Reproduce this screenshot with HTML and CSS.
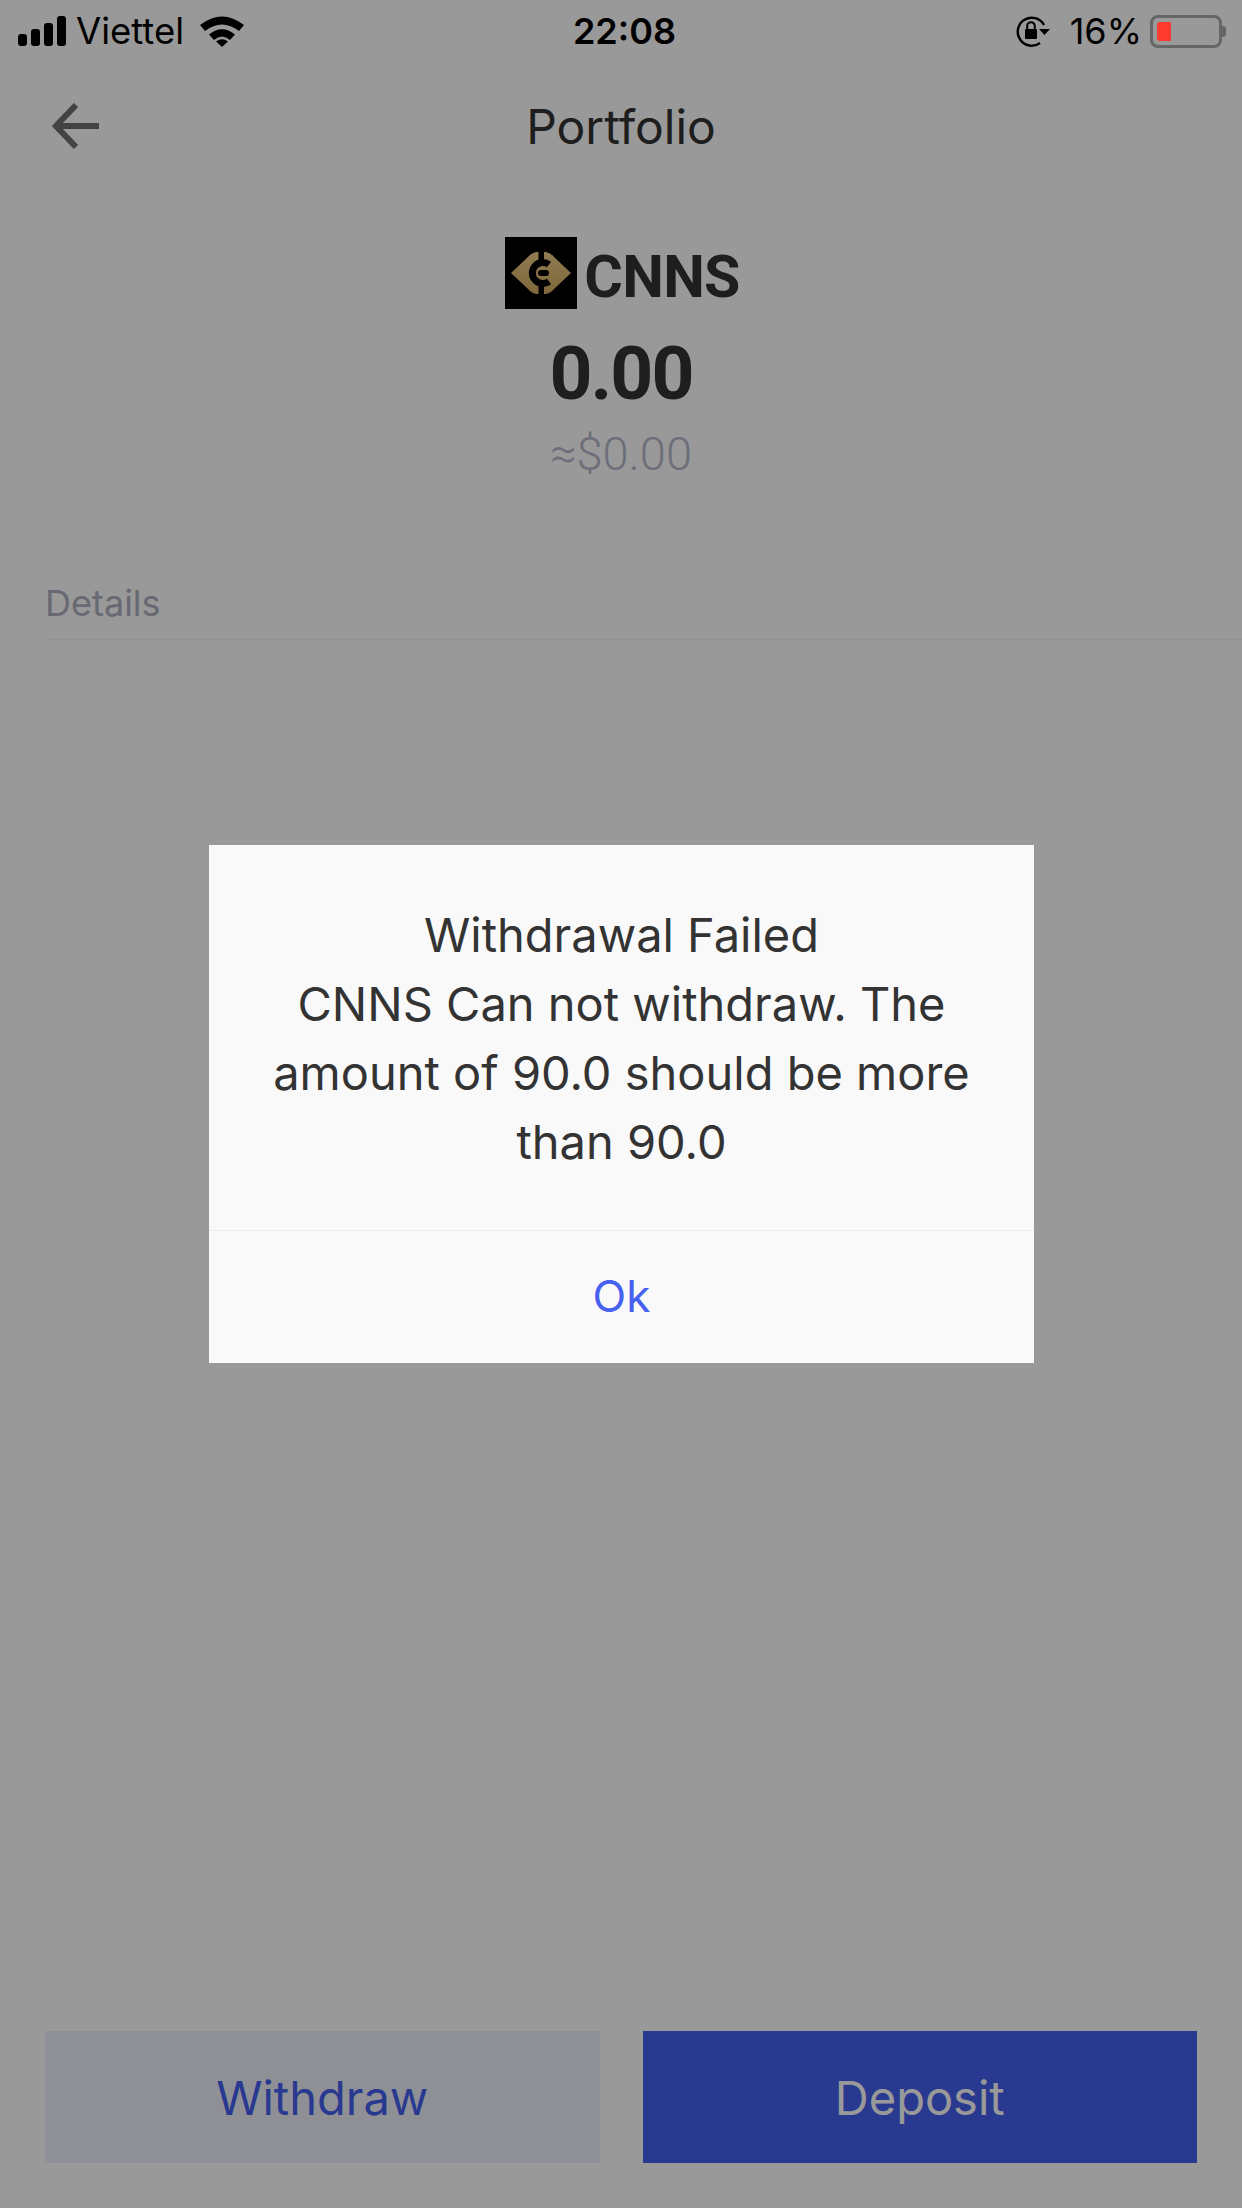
FILE: index.html
```html
<!DOCTYPE html>
<html lang="en">
<head>
    <meta charset="UTF-8">
    <meta name="viewport" content="width=device-width, initial-scale=1.0">
    <title>Portfolio</title>
    <link rel="stylesheet" href="styles.css">
</head>
<body>
    <div class="statusbar">
        <div class="status-left">
            <svg class="signal" width="50" height="30" viewBox="0 0 50 30">
                <rect x="0" y="18" width="9" height="12" rx="3"/>
                <rect x="13" y="13" width="9" height="17" rx="3"/>
                <rect x="26" y="7" width="9" height="23" rx="3"/>
                <rect x="39" y="0" width="9" height="30" rx="3"/>
            </svg>
            <span class="carrier">Viettel</span>
            <svg class="wifi" width="44" height="32" viewBox="0 0 44 32">
                <path d="M0 10 Q22 -7 44 10 L39 16 Q22 3 5 16 Z"/>
                <path d="M9 19.5 Q22 9 35 19.5 L30 25 Q22 18 14 25 Z"/>
                <path d="M16 26.5 Q22 22 28 26.5 L22 32 Z"/>
            </svg>
        </div>
        <div class="status-time">22:08</div>
        <div class="status-right">
            <svg class="rotation" width="36" height="32" viewBox="0 0 36 32">
                <path d="M29 10 A14 14 0 1 0 25 28" fill="none" stroke="#000" stroke-width="2.4"/>
                <path d="M24 14 L35 14 L29.500 20 Z"/>
                <rect x="10" y="14" width="12" height="10" rx="1"/>
                <path d="M12.200 14 V11 A3.800 3.800 0 0 1 19.800 11 V14" fill="none" stroke="#000" stroke-width="2"/>
            </svg>
            <span class="percent">16%</span>
            <div class="battery">
                <div class="battery-level"></div>
            </div>
            <div class="battery-cap"></div>
        </div>
    </div>

    <div class="navbar">
        <svg class="back" width="50" height="46" viewBox="0 0 50 46">
            <path d="M24 2 L4 23 L24 44 M4 23 H47" fill="none" stroke="#717171" stroke-width="6"/>
        </svg>
        <h1>Portfolio</h1>
    </div>

    <div class="coin">
        <div class="coin-name">
            <svg class="coin-logo" width="72" height="72" viewBox="0 0 72 72">
                <defs>
                    <linearGradient id="gold" x1="0" y1="0" x2="0" y2="1">
                        <stop offset="0" stop-color="#f0cf8a"/>
                        <stop offset="1" stop-color="#d2ad63"/>
                    </linearGradient>
                </defs>
                <rect width="72" height="72" fill="#000"/>
                <path d="M36 15 H41 Q46 16 49 20 L66 36 L49 52 Q46 56 41 57 H31 Q26 56 23 52 L6 36 L23 20 Q26 16 31 15 Z" fill="url(#gold)"/>
                <path d="M33.500 14 H39 V25 H33.500 Z M33.500 47 H39 V58 H33.500 Z" fill="#000"/>
                <path d="M44 27.500 A10.500 10.500 0 1 0 44 44.500" fill="none" stroke="#000" stroke-width="7"/>
                <path d="M36 36 H41" fill="none" stroke="#000" stroke-width="6" stroke-linecap="round"/>
            </svg>
            <span class="coin-symbol">CNNS</span>
        </div>
        <div class="coin-amount">0.00</div>
        <div class="coin-value">≈$0.00</div>
    </div>

    <div class="details">Details</div>

    <div class="actions">
        <button class="btn btn-withdraw">Withdraw</button>
        <button class="btn btn-deposit">Deposit</button>
    </div>

    <div class="overlay">
        <div class="dialog">
            <div class="dialog-text">Withdrawal Failed<br>CNNS Can not withdraw. The amount of 90.0 should be more than 90.0</div>
            <div class="dialog-btn">Ok</div>
        </div>
    </div>
</body>
</html>
```

FILE: styles.css
```css
* {
    box-sizing: border-box;
}
html, body {
    margin: 0;
    padding: 0;
}
body {
    position: relative;
    display: flex;
    flex-direction: column;
    width: 1242px;
    height: 2208px;
    overflow: hidden;
    background: #fff;
    font-family: Inter, "Noto Sans", sans-serif;
    color: #323232;
}

/* status bar stays above the dim layer */
.statusbar {
    position: relative;
    z-index: 2;
    display: flex;
    justify-content: space-between;
    align-items: center;
    height: 62px;
    padding: 0 16px 0 18px;
    color: #000;
    font-size: 36px;
}
.status-left, .status-right {
    display: flex;
    align-items: center;
    flex: 1;
}
.status-right {
    justify-content: flex-end;
}
.signal {
    margin-right: 8px;
}
.carrier {
    font-size: 36.5px;
}
.wifi {
    margin-left: 16px;
}
.status-time {
    margin-left: 5px;
    font-weight: 600;
    font-size: 36px;
}
.rotation {
    margin-right: 19px;
}
.percent {
    margin-right: 8px;
}
.battery {
    width: 72px;
    height: 33px;
    padding: 4px;
    border: 3px solid #666;
    border-radius: 8px;
}
.battery-level {
    width: 14px;
    height: 100%;
    background: #ff3b30;
    border-radius: 3px 0 0 3px;
}
.battery-cap {
    width: 4px;
    height: 11px;
    background: #666;
    border-radius: 0 3px 3px 0;
}

.navbar {
    position: relative;
    display: flex;
    justify-content: center;
    align-items: center;
    height: 128px;
}
.navbar h1 {
    margin: 0;
    font-size: 48px;
    font-weight: 400;
}
.back {
    position: absolute;
    left: 52px;
    top: 41px;
}

.coin {
    display: flex;
    flex-direction: column;
    align-items: center;
    padding-top: 47px;
}
.coin-name {
    display: flex;
    align-items: center;
    height: 72px;
    margin-left: 3px;
    font-family: Roboto, sans-serif;
    font-size: 59px;
    font-weight: 700;
    letter-spacing: -0.7px;
}
.coin-logo {
    margin-right: 7px;
}
.coin-symbol {
    padding-top: 6px;
}
.coin-amount {
    margin-top: 22px;
    height: 84px;
    line-height: 84px;
    font-family: Roboto, sans-serif;
    font-size: 75px;
    font-weight: 700;
    letter-spacing: -2px;
}
.coin-value {
    margin-top: 11px;
    font-family: Roboto, sans-serif;
    font-size: 47px;
    font-weight: 300;
    color: #b6b8ca;
}

.details {
    margin: 100px 0 0 45px;
    padding-bottom: 14px;
    border-bottom: 1px solid #f4f4f4;
    font-size: 36px;
    color: #aeb0c0;
}

.actions {
    display: flex;
    gap: 43px;
    margin-top: auto;
    padding: 0 45px 45px;
}
.btn {
    flex: 1;
    height: 132px;
    border: none;
    font-family: Inter, sans-serif;
    font-size: 47px;
}
.btn-withdraw {
    background: #eef0fa;
    color: #4660f0;
}
.btn-deposit {
    background: #4660f0;
    color: #fff;
}

.overlay {
    position: absolute;
    z-index: 1;
    top: 0;
    left: 0;
    width: 100%;
    height: 100%;
    padding: 845px 208px 0 209px;
    background: rgba(0,0,0,0.4);
}
.dialog {
    background: #f9f9f9;
    text-align: center;
}
.dialog-text {
    height: 386px;
    padding: 55px 56px 0;
    border-bottom: 1px solid #ececec;
    font-size: 47px;
    line-height: 69px;
    color: #333;
}
.dialog-btn {
    height: 132px;
    line-height: 131px;
    font-size: 44px;
    color: #4660f0;
}
```
